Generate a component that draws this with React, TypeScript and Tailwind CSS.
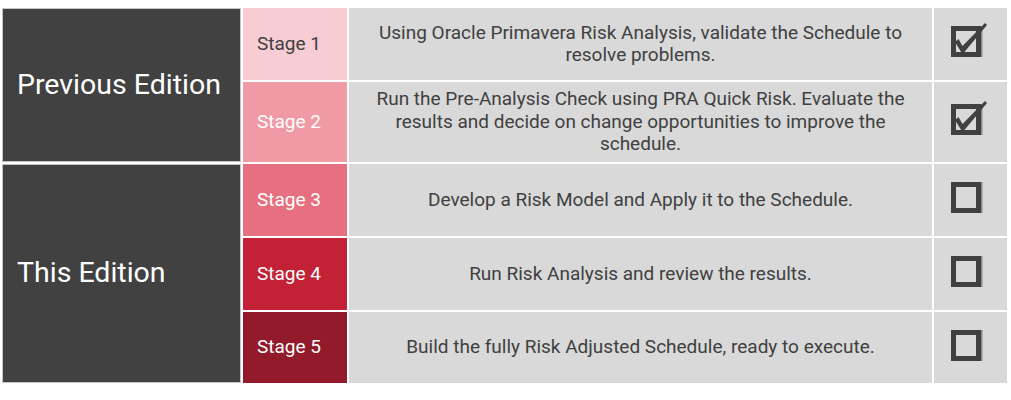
import React from "react";

const rows = [
  { stage: "Stage 1", bg: "bg-[#f7ccd3]", fg: "text-[#404040]", text: <>Using Oracle Primavera Risk Analysis, validate the Schedule to<br />resolve problems.</>, checked: true },
  { stage: "Stage 2", bg: "bg-[#ef9aa4]", fg: "text-white", text: <>Run the Pre-Analysis Check using PRA Quick Risk. Evaluate the<br />results and decide on change opportunities to improve the<br />schedule.</>, checked: true },
  { stage: "Stage 3", bg: "bg-[#e6707f]", fg: "text-white", text: <>Develop a Risk Model and Apply it to the Schedule.</>, checked: false },
  { stage: "Stage 4", bg: "bg-[#c32136]", fg: "text-white", text: <>Run Risk Analysis and review the results.</>, checked: false },
  { stage: "Stage 5", bg: "bg-[#921a2a]", fg: "text-white", text: <>Build the fully Risk Adjusted Schedule, ready to execute.</>, checked: false },
];

const rowStarts = ["row-start-1", "row-start-2", "row-start-3", "row-start-4", "row-start-5"];

function Box({ checked }: { checked: boolean }) {
  return (
    <svg width="40" height="40" viewBox="0 0 40 40" className="mr-[4px] mt-[-4px]">
      <rect x="32" y="4" width="1.5" height="31" fill="#8a8a8a" />
      <rect x="4.5" y="6.5" width="25" height="26" fill="none" stroke="#404040" strokeWidth="5" />
      {checked && (
        <polygon points="6,20 9.5,17 13.5,24 36,1 38,3 15,30.5 12.5,30.5" fill="#404040" />
      )}
    </svg>
  );
}

export default function App() {
  return (
    <div className="w-[1011px] h-[400px] bg-white pt-[8px] pl-[2px]" style={{ fontFamily: "Roboto, 'Noto Sans', sans-serif" }}>
      <div className="grid grid-cols-[239px_104px_583px_73px] grid-rows-[72px_80px_72px_72px_71px] gap-[2px]">
        <div className="col-start-1 row-start-1 row-span-2 bg-[#414141] border border-[#c4c4c4] flex items-center pl-[14px] text-white text-[28.5px] leading-none">
          Previous Edition
        </div>
        <div className="col-start-1 row-start-3 row-span-3 bg-[#414141] border border-[#c4c4c4] flex items-center pl-[14px] text-white text-[28.5px] leading-none">
          This Edition
        </div>
        {rows.map((r, i) => (
          <React.Fragment key={r.stage}>
            <div className={`col-start-2 ${rowStarts[i]} ${r.bg} ${r.fg} flex items-center pl-[14px] text-[19px]`}>
              {r.stage}
            </div>
            <div className={`col-start-3 ${rowStarts[i]} bg-[#d9d9d9] flex items-center justify-center text-center text-[#404040] text-[19px] leading-[22.5px]`}>
              <span>{r.text}</span>
            </div>
            <div className={`col-start-4 ${rowStarts[i]} bg-[#d9d9d9] flex items-center justify-center`}>
              <Box checked={r.checked} />
            </div>
          </React.Fragment>
        ))}
      </div>
    </div>
  );
}
